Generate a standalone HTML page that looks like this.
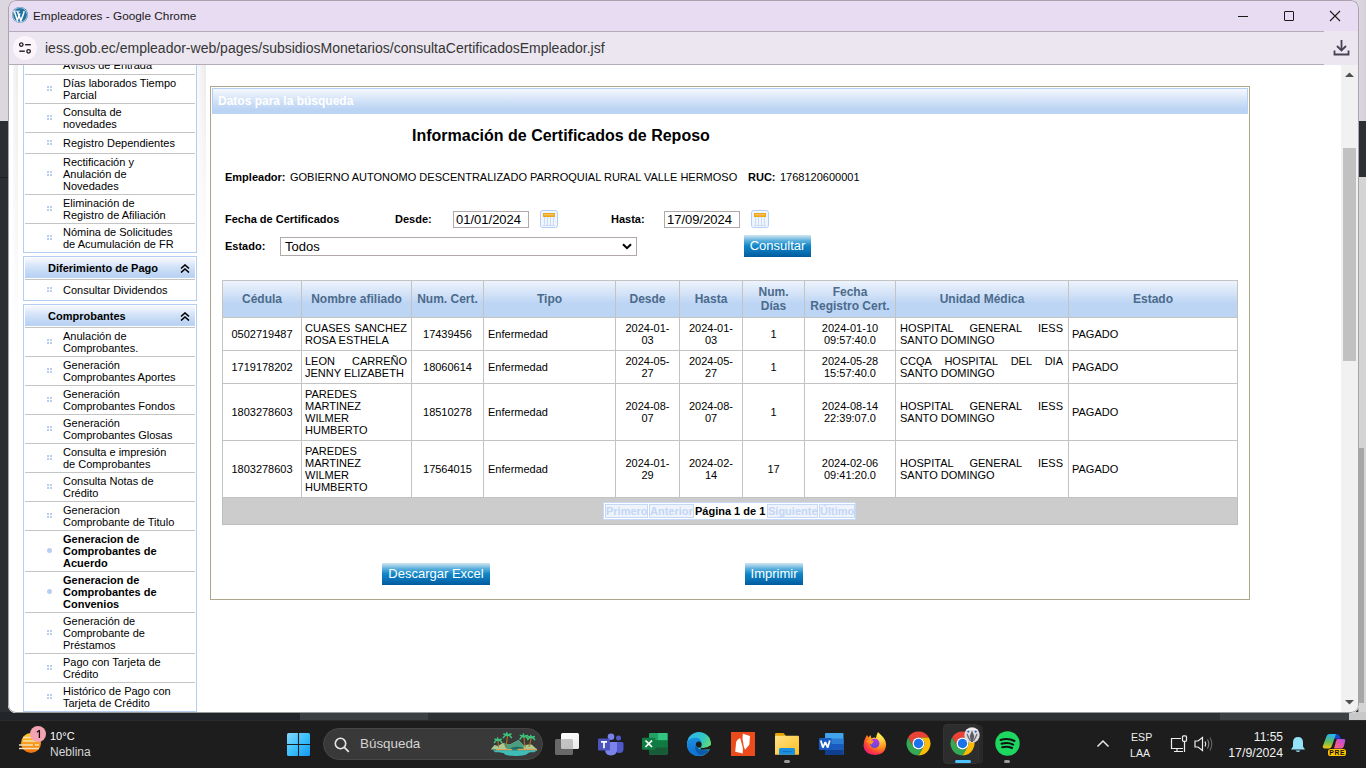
<!DOCTYPE html>
<html><head><meta charset="utf-8"><style>
*{box-sizing:border-box;margin:0;padding:0}
html,body{width:1366px;height:768px;overflow:hidden;background:#2b2f33;font-family:"Liberation Sans",sans-serif;position:relative}
.a{position:absolute}
.t{position:absolute;white-space:nowrap;line-height:12px}
#win{left:8px;top:0;width:1351px;height:713px;background:#fff;border-radius:8px;overflow:hidden}
#title{left:0;top:0;width:1351px;height:31px;background:#e8dcf2}
#addr{left:0;top:31px;width:1351px;height:34px;background:#ebe6ef}
#content{left:0;top:65px;width:1351px;height:648px;background:#fff;overflow:hidden}
#pg{left:-8px;top:-65px;width:1366px;height:768px}
#task{left:0;top:720px;width:1366px;height:48px;background:#1d1d1d;border-top:1px solid #2c2c2c}
.sb{font-size:11px;color:#000}
.sep{position:absolute;left:25px;width:170px;height:1px;background:#c4c4c4}
.dots{position:absolute;width:5px;height:5px;background:
 linear-gradient(#b9cff2,#b9cff2) 0 0/2px 2px no-repeat,
 linear-gradient(#b9cff2,#b9cff2) 3px 0/2px 2px no-repeat,
 linear-gradient(#b9cff2,#b9cff2) 0 3px/2px 2px no-repeat,
 linear-gradient(#b9cff2,#b9cff2) 3px 3px/2px 2px no-repeat}
.bdot{position:absolute;width:5px;height:5px;border-radius:50%;background:#b9cff2}
.panel{position:absolute;left:23px;width:174px;border:1px solid #b4cdf3;background:#fff}
.phead{position:absolute;left:25px;width:170px;height:20px;background:linear-gradient(#f6f9fe,#cfe0f7 50%,#bcd4f4 85%)}
.ptxt{position:absolute;left:48px;font-size:11px;font-weight:bold;line-height:12px;white-space:nowrap}
</style></head><body>
<div class="a" style="left:0px;top:0px;width:1366px;height:121px;background:#dcd6df"></div>
<div class="a" style="left:0px;top:121px;width:8px;height:599px;background:#2b2f33"></div>
<div class="a" style="left:0px;top:177px;width:8px;height:1px;background:#1c1f22"></div>
<div class="a" style="left:1358px;top:0px;width:8px;height:121px;background:linear-gradient(to right,#ddd7e0,#d6d0da)"></div>
<div class="a" style="left:1358px;top:121px;width:8px;height:56px;background:#2c3034"></div>
<div class="a" style="left:1358px;top:177px;width:8px;height:543px;background:#d4d4d5;border-left:1px solid #a0a0a2"></div>
<div class="a" style="left:1358px;top:448px;width:6px;height:255px;background:#a6a6a6"></div>
<div class="a" style="left:0px;top:712px;width:300px;height:8px;background:#22262a"></div>
<div class="a" style="left:300px;top:712px;width:128px;height:8px;background:#3c4043"></div>
<div class="a" style="left:428px;top:712px;width:792px;height:8px;background:#2e3134"></div>
<div class="a" style="left:1220px;top:712px;width:129px;height:8px;background:#3c4043"></div>
<div class="a" style="left:1349px;top:712px;width:17px;height:8px;background:#c8c8c8"></div>
<div class="a" id="win"><div class="a" id="title"></div><div class="a" id="addr"></div><div class="a" id="content"><div class="a" id="pg">
<div class="panel" style="top:20px;height:233px"></div>
<div class="t sb" style="left:63px;top:59px;">Avisos de Entrada</div>
<div class="sep" style="top:74px"></div>
<div class="t sb" style="left:63px;top:77px;">Días laborados Tiempo</div>
<div class="t sb" style="left:63px;top:89px;">Parcial</div>
<div class="dots" style="left:47px;top:86px"></div>
<div class="sep" style="top:103px"></div>
<div class="t sb" style="left:63px;top:106px;">Consulta de</div>
<div class="t sb" style="left:63px;top:118px;">novedades</div>
<div class="dots" style="left:47px;top:115px"></div>
<div class="sep" style="top:132px"></div>
<div class="t sb" style="left:63px;top:137px;">Registro Dependientes</div>
<div class="dots" style="left:47px;top:140px"></div>
<div class="sep" style="top:153px"></div>
<div class="t sb" style="left:63px;top:156px;">Rectificación y</div>
<div class="t sb" style="left:63px;top:168px;">Anulación de</div>
<div class="t sb" style="left:63px;top:180px;">Novedades</div>
<div class="dots" style="left:47px;top:171px"></div>
<div class="sep" style="top:194px"></div>
<div class="t sb" style="left:63px;top:197px;">Eliminación de</div>
<div class="t sb" style="left:63px;top:209px;">Registro de Afiliación</div>
<div class="dots" style="left:47px;top:206px"></div>
<div class="sep" style="top:223px"></div>
<div class="t sb" style="left:63px;top:226px;">Nómina de Solicitudes</div>
<div class="t sb" style="left:63px;top:238px;">de Acumulación de FR</div>
<div class="dots" style="left:47px;top:235px"></div>
<div class="panel" style="top:256px;height:45px"></div>
<div class="phead" style="top:258px"></div>
<div class="ptxt" style="top:262px">Diferimiento de Pago</div>
<svg class="a" style="left:180px;top:264px" width="10" height="9" viewBox="0 0 10 9"><path d="M1 4.5L5 1L9 4.5M1 8.5L5 5L9 8.5" fill="none" stroke="#000" stroke-width="1.6"/></svg>
<div class="sep" style="top:279px"></div>
<div class="t sb" style="left:63px;top:284px;">Consultar Dividendos</div>
<div class="dots" style="left:47px;top:287px"></div>
<div class="panel" style="top:304px;height:408px"></div>
<div class="phead" style="top:306px"></div>
<div class="ptxt" style="top:310px">Comprobantes</div>
<svg class="a" style="left:180px;top:312px" width="10" height="9" viewBox="0 0 10 9"><path d="M1 4.5L5 1L9 4.5M1 8.5L5 5L9 8.5" fill="none" stroke="#000" stroke-width="1.6"/></svg>
<div class="sep" style="top:327px"></div>
<div class="t sb" style="left:63px;top:330px;">Anulación de</div>
<div class="t sb" style="left:63px;top:342px;">Comprobantes.</div>
<div class="dots" style="left:47px;top:339px"></div>
<div class="sep" style="top:356px"></div>
<div class="t sb" style="left:63px;top:359px;">Generación</div>
<div class="t sb" style="left:63px;top:371px;">Comprobantes Aportes</div>
<div class="dots" style="left:47px;top:368px"></div>
<div class="sep" style="top:385px"></div>
<div class="t sb" style="left:63px;top:388px;">Generación</div>
<div class="t sb" style="left:63px;top:400px;">Comprobantes Fondos</div>
<div class="dots" style="left:47px;top:397px"></div>
<div class="sep" style="top:414px"></div>
<div class="t sb" style="left:63px;top:417px;">Generación</div>
<div class="t sb" style="left:63px;top:429px;">Comprobantes Glosas</div>
<div class="dots" style="left:47px;top:426px"></div>
<div class="sep" style="top:443px"></div>
<div class="t sb" style="left:63px;top:446px;">Consulta e impresión</div>
<div class="t sb" style="left:63px;top:458px;">de Comprobantes</div>
<div class="dots" style="left:47px;top:455px"></div>
<div class="sep" style="top:472px"></div>
<div class="t sb" style="left:63px;top:475px;">Consulta Notas de</div>
<div class="t sb" style="left:63px;top:487px;">Crédito</div>
<div class="dots" style="left:47px;top:484px"></div>
<div class="sep" style="top:501px"></div>
<div class="t sb" style="left:63px;top:504px;">Generacion</div>
<div class="t sb" style="left:63px;top:516px;">Comprobante de Titulo</div>
<div class="dots" style="left:47px;top:513px"></div>
<div class="sep" style="top:530px"></div>
<div class="t sb" style="left:63px;top:533px;font-weight:bold">Generacion de</div>
<div class="t sb" style="left:63px;top:545px;font-weight:bold">Comprobantes de</div>
<div class="t sb" style="left:63px;top:557px;font-weight:bold">Acuerdo</div>
<div class="bdot" style="left:47px;top:548px"></div>
<div class="sep" style="top:571px"></div>
<div class="t sb" style="left:63px;top:574px;font-weight:bold">Generacion de</div>
<div class="t sb" style="left:63px;top:586px;font-weight:bold">Comprobantes de</div>
<div class="t sb" style="left:63px;top:598px;font-weight:bold">Convenios</div>
<div class="bdot" style="left:47px;top:589px"></div>
<div class="sep" style="top:612px"></div>
<div class="t sb" style="left:63px;top:615px;">Generación de</div>
<div class="t sb" style="left:63px;top:627px;">Comprobante de</div>
<div class="t sb" style="left:63px;top:639px;">Préstamos</div>
<div class="dots" style="left:47px;top:630px"></div>
<div class="sep" style="top:653px"></div>
<div class="t sb" style="left:63px;top:656px;">Pago con Tarjeta de</div>
<div class="t sb" style="left:63px;top:668px;">Crédito</div>
<div class="dots" style="left:47px;top:665px"></div>
<div class="sep" style="top:682px"></div>
<div class="t sb" style="left:63px;top:685px;">Histórico de Pago con</div>
<div class="t sb" style="left:63px;top:697px;">Tarjeta de Crédito</div>
<div class="dots" style="left:47px;top:694px"></div>
<div class="a" style="left:13px;top:65px;width:5px;height:290px;background:linear-gradient(to bottom,rgba(255,255,255,0),rgba(255,255,255,1)),linear-gradient(to right,#f7f7f7,#ececec)"></div>
<div class="a" style="left:197px;top:65px;width:9px;height:200px;background:linear-gradient(to bottom,rgba(255,255,255,0),rgba(255,255,255,1)),linear-gradient(to right,#fafafa,#ebebeb)"></div>
<div class="a" style="left:210px;top:86px;width:1040px;height:514px;border:1px solid #aea68a"></div>
<div class="a" style="left:212px;top:88px;width:1036px;height:26px;border-top:1px solid #b6cff5;border-left:1px solid #b6cff5;border-right:1px solid #b6cff5;background:linear-gradient(#f5f8fe,#d0e1f7 50%,#bcd4f4 80%)"></div>
<div class="t" style="left:218px;top:94px;font-size:12px;font-weight:bold;color:#fff;line-height:14px">Datos para la búsqueda</div>
<div class="t" style="left:412px;top:127px;font-size:16px;font-weight:bold;color:#000;line-height:18px">Información de Certificados de Reposo</div>
<div class="t" style="left:225px;top:171px;font-size:11px;font-weight:bold;line-height:12px">Empleador:</div>
<div class="t" style="left:290px;top:171px;font-size:11px;line-height:12px">GOBIERNO AUTONOMO DESCENTRALIZADO PARROQUIAL RURAL VALLE HERMOSO</div>
<div class="t" style="left:748px;top:171px;font-size:11px;font-weight:bold;line-height:12px">RUC:</div>
<div class="t" style="left:780px;top:171px;font-size:11px;line-height:12px">1768120600001</div>
<div class="t" style="left:225px;top:213px;font-size:11px;font-weight:bold;line-height:12px">Fecha de Certificados</div>
<div class="t" style="left:395px;top:213px;font-size:11px;font-weight:bold;line-height:12px">Desde:</div>
<div class="t" style="left:611px;top:213px;font-size:11px;font-weight:bold;line-height:12px">Hasta:</div>
<div class="t" style="left:225px;top:240px;font-size:11px;font-weight:bold;line-height:12px">Estado:</div>
<div class="a" style="left:453px;top:211px;width:76px;height:17px;border:1px solid #b1a9a9;background:#fff"></div>
<div class="t" style="left:456px;top:212px;font-size:13px;line-height:15px">01/01/2024</div>
<div class="a" style="left:664px;top:211px;width:76px;height:17px;border:1px solid #b1a9a9;background:#fff"></div>
<div class="t" style="left:667px;top:212px;font-size:13px;line-height:15px">17/09/2024</div>
<svg class="a" style="left:540px;top:210px" width="18" height="18" viewBox="0 0 18 18"><rect x="0.5" y="0.5" width="17" height="17" rx="2" fill="#eef5fe" stroke="#b3cff7"/><rect x="3" y="3" width="12" height="4" fill="#eea418"/><rect x="4" y="4.3" width="10" height="1" fill="#f6cf7a"/><path d="M4.5 7v8M7.5 7v8M10.5 7v8M13.5 7v8" stroke="#c9dcf5" stroke-width="1"/><path d="M3 15.5h12" stroke="#d0dcec"/></svg>
<svg class="a" style="left:751px;top:210px" width="18" height="18" viewBox="0 0 18 18"><rect x="0.5" y="0.5" width="17" height="17" rx="2" fill="#eef5fe" stroke="#b3cff7"/><rect x="3" y="3" width="12" height="4" fill="#eea418"/><rect x="4" y="4.3" width="10" height="1" fill="#f6cf7a"/><path d="M4.5 7v8M7.5 7v8M10.5 7v8M13.5 7v8" stroke="#c9dcf5" stroke-width="1"/><path d="M3 15.5h12" stroke="#d0dcec"/></svg>
<div class="a" style="left:280px;top:237px;width:357px;height:19px;border:1px solid #b1a9a9;background:#fff"></div>
<div class="t" style="left:285px;top:239px;font-size:13px;line-height:15px">Todos</div>
<svg class="a" style="left:622px;top:243px" width="10" height="7" viewBox="0 0 10 7"><path d="M1 1.2L5 5.2L9 1.2" fill="none" stroke="#000" stroke-width="2"/></svg>
<div class="a" style="left:744px;top:235px;width:67px;height:22px;background:linear-gradient(#d3e6f1 0%,#5fb1dd 25%,#0f86c7 50%,#0a72b5 75%,#005a9e 100%);color:#fff;font-size:13px;line-height:15px;text-align:center;padding-top:3px">Consultar</div>
<div class="a" style="left:382px;top:563px;width:108px;height:22px;background:linear-gradient(#d3e6f1 0%,#5fb1dd 25%,#0f86c7 50%,#0a72b5 75%,#005a9e 100%);color:#fff;font-size:13px;line-height:15px;text-align:center;padding-top:3px">Descargar Excel</div>
<div class="a" style="left:745px;top:563px;width:58px;height:22px;background:linear-gradient(#d3e6f1 0%,#5fb1dd 25%,#0f86c7 50%,#0a72b5 75%,#005a9e 100%);color:#fff;font-size:13px;line-height:15px;text-align:center;padding-top:3px">Imprimir</div>
<div class="a" style="left:222px;top:281px;width:1015px;height:36px;background:linear-gradient(#eef4fd,#cfe0f7 40%,#bdd5f4 62%,#bcd5f4)"></div>
<div class="a" style="left:222px;top:280px;width:1px;height:218px;background:#c3c3c3"></div>
<div class="a" style="left:301px;top:280px;width:1px;height:218px;background:#c3c3c3"></div>
<div class="a" style="left:411px;top:280px;width:1px;height:218px;background:#c3c3c3"></div>
<div class="a" style="left:483px;top:280px;width:1px;height:218px;background:#c3c3c3"></div>
<div class="a" style="left:615px;top:280px;width:1px;height:218px;background:#c3c3c3"></div>
<div class="a" style="left:679px;top:280px;width:1px;height:218px;background:#c3c3c3"></div>
<div class="a" style="left:742px;top:280px;width:1px;height:218px;background:#c3c3c3"></div>
<div class="a" style="left:804px;top:280px;width:1px;height:218px;background:#c3c3c3"></div>
<div class="a" style="left:895px;top:280px;width:1px;height:218px;background:#c3c3c3"></div>
<div class="a" style="left:1068px;top:280px;width:1px;height:218px;background:#c3c3c3"></div>
<div class="a" style="left:1237px;top:280px;width:1px;height:218px;background:#c3c3c3"></div>
<div class="a" style="left:222px;top:280px;width:1016px;height:1px;background:#c3c3c3"></div>
<div class="a" style="left:222px;top:317px;width:1016px;height:1px;background:#c3c3c3"></div>
<div class="a" style="left:222px;top:350px;width:1016px;height:1px;background:#c3c3c3"></div>
<div class="a" style="left:222px;top:383px;width:1016px;height:1px;background:#c3c3c3"></div>
<div class="a" style="left:222px;top:440px;width:1016px;height:1px;background:#c3c3c3"></div>
<div class="a" style="left:222px;top:497px;width:1016px;height:1px;background:#c3c3c3"></div>
<div class="t" style="left:223px;width:78px;top:292px;text-align:center;font-size:12px;font-weight:bold;color:#4b6b8c;line-height:14px">Cédula</div>
<div class="t" style="left:302px;width:109px;top:292px;text-align:center;font-size:12px;font-weight:bold;color:#4b6b8c;line-height:14px">Nombre afiliado</div>
<div class="t" style="left:412px;width:71px;top:292px;text-align:center;font-size:12px;font-weight:bold;color:#4b6b8c;line-height:14px">Num. Cert.</div>
<div class="t" style="left:484px;width:131px;top:292px;text-align:center;font-size:12px;font-weight:bold;color:#4b6b8c;line-height:14px">Tipo</div>
<div class="t" style="left:616px;width:63px;top:292px;text-align:center;font-size:12px;font-weight:bold;color:#4b6b8c;line-height:14px">Desde</div>
<div class="t" style="left:680px;width:62px;top:292px;text-align:center;font-size:12px;font-weight:bold;color:#4b6b8c;line-height:14px">Hasta</div>
<div class="t" style="left:743px;width:61px;top:285px;text-align:center;font-size:12px;font-weight:bold;color:#4b6b8c;line-height:14px">Num.</div>
<div class="t" style="left:743px;width:61px;top:299px;text-align:center;font-size:12px;font-weight:bold;color:#4b6b8c;line-height:14px">Días</div>
<div class="t" style="left:805px;width:90px;top:285px;text-align:center;font-size:12px;font-weight:bold;color:#4b6b8c;line-height:14px">Fecha</div>
<div class="t" style="left:805px;width:90px;top:299px;text-align:center;font-size:12px;font-weight:bold;color:#4b6b8c;line-height:14px">Registro Cert.</div>
<div class="t" style="left:896px;width:172px;top:292px;text-align:center;font-size:12px;font-weight:bold;color:#4b6b8c;line-height:14px">Unidad Médica</div>
<div class="t" style="left:1069px;width:168px;top:292px;text-align:center;font-size:12px;font-weight:bold;color:#4b6b8c;line-height:14px">Estado</div>
<div class="t" style="left:223px;width:78px;top:328px;text-align:center;font-size:11px">0502719487</div>
<div class="t" style="left:305px;width:102px;top:322px;font-size:11px;display:flex;justify-content:space-between"><span>CUASES</span><span>SANCHEZ</span></div>
<div class="t" style="left:305px;top:334px;font-size:11px">ROSA ESTHELA</div>
<div class="t" style="left:412px;width:71px;top:328px;text-align:center;font-size:11px">17439456</div>
<div class="t" style="left:488px;top:328px;font-size:11px">Enfermedad</div>
<div class="t" style="left:616px;width:63px;top:322px;text-align:center;font-size:11px">2024-01-</div>
<div class="t" style="left:616px;width:63px;top:334px;text-align:center;font-size:11px">03</div>
<div class="t" style="left:680px;width:62px;top:322px;text-align:center;font-size:11px">2024-01-</div>
<div class="t" style="left:680px;width:62px;top:334px;text-align:center;font-size:11px">03</div>
<div class="t" style="left:743px;width:61px;top:328px;text-align:center;font-size:11px">1</div>
<div class="t" style="left:805px;width:90px;top:322px;text-align:center;font-size:11px">2024-01-10</div>
<div class="t" style="left:805px;width:90px;top:334px;text-align:center;font-size:11px">09:57:40.0</div>
<div class="t" style="left:900px;width:163px;top:322px;font-size:11px;display:flex;justify-content:space-between"><span>HOSPITAL</span><span>GENERAL</span><span>IESS</span></div>
<div class="t" style="left:900px;top:334px;font-size:11px">SANTO DOMINGO</div>
<div class="t" style="left:1072px;top:328px;font-size:11px">PAGADO</div>
<div class="t" style="left:223px;width:78px;top:361px;text-align:center;font-size:11px">1719178202</div>
<div class="t" style="left:305px;width:102px;top:355px;font-size:11px;display:flex;justify-content:space-between"><span>LEON</span><span>CARREÑO</span></div>
<div class="t" style="left:305px;top:367px;font-size:11px">JENNY ELIZABETH</div>
<div class="t" style="left:412px;width:71px;top:361px;text-align:center;font-size:11px">18060614</div>
<div class="t" style="left:488px;top:361px;font-size:11px">Enfermedad</div>
<div class="t" style="left:616px;width:63px;top:355px;text-align:center;font-size:11px">2024-05-</div>
<div class="t" style="left:616px;width:63px;top:367px;text-align:center;font-size:11px">27</div>
<div class="t" style="left:680px;width:62px;top:355px;text-align:center;font-size:11px">2024-05-</div>
<div class="t" style="left:680px;width:62px;top:367px;text-align:center;font-size:11px">27</div>
<div class="t" style="left:743px;width:61px;top:361px;text-align:center;font-size:11px">1</div>
<div class="t" style="left:805px;width:90px;top:355px;text-align:center;font-size:11px">2024-05-28</div>
<div class="t" style="left:805px;width:90px;top:367px;text-align:center;font-size:11px">15:57:40.0</div>
<div class="t" style="left:900px;width:163px;top:355px;font-size:11px;display:flex;justify-content:space-between"><span>CCQA</span><span>HOSPITAL</span><span>DEL</span><span>DIA</span></div>
<div class="t" style="left:900px;top:367px;font-size:11px">SANTO DOMINGO</div>
<div class="t" style="left:1072px;top:361px;font-size:11px">PAGADO</div>
<div class="t" style="left:223px;width:78px;top:406px;text-align:center;font-size:11px">1803278603</div>
<div class="t" style="left:305px;top:388px;font-size:11px">PAREDES</div>
<div class="t" style="left:305px;top:400px;font-size:11px">MARTINEZ</div>
<div class="t" style="left:305px;top:412px;font-size:11px">WILMER</div>
<div class="t" style="left:305px;top:424px;font-size:11px">HUMBERTO</div>
<div class="t" style="left:412px;width:71px;top:406px;text-align:center;font-size:11px">18510278</div>
<div class="t" style="left:488px;top:406px;font-size:11px">Enfermedad</div>
<div class="t" style="left:616px;width:63px;top:400px;text-align:center;font-size:11px">2024-08-</div>
<div class="t" style="left:616px;width:63px;top:412px;text-align:center;font-size:11px">07</div>
<div class="t" style="left:680px;width:62px;top:400px;text-align:center;font-size:11px">2024-08-</div>
<div class="t" style="left:680px;width:62px;top:412px;text-align:center;font-size:11px">07</div>
<div class="t" style="left:743px;width:61px;top:406px;text-align:center;font-size:11px">1</div>
<div class="t" style="left:805px;width:90px;top:400px;text-align:center;font-size:11px">2024-08-14</div>
<div class="t" style="left:805px;width:90px;top:412px;text-align:center;font-size:11px">22:39:07.0</div>
<div class="t" style="left:900px;width:163px;top:400px;font-size:11px;display:flex;justify-content:space-between"><span>HOSPITAL</span><span>GENERAL</span><span>IESS</span></div>
<div class="t" style="left:900px;top:412px;font-size:11px">SANTO DOMINGO</div>
<div class="t" style="left:1072px;top:406px;font-size:11px">PAGADO</div>
<div class="t" style="left:223px;width:78px;top:463px;text-align:center;font-size:11px">1803278603</div>
<div class="t" style="left:305px;top:445px;font-size:11px">PAREDES</div>
<div class="t" style="left:305px;top:457px;font-size:11px">MARTINEZ</div>
<div class="t" style="left:305px;top:469px;font-size:11px">WILMER</div>
<div class="t" style="left:305px;top:481px;font-size:11px">HUMBERTO</div>
<div class="t" style="left:412px;width:71px;top:463px;text-align:center;font-size:11px">17564015</div>
<div class="t" style="left:488px;top:463px;font-size:11px">Enfermedad</div>
<div class="t" style="left:616px;width:63px;top:457px;text-align:center;font-size:11px">2024-01-</div>
<div class="t" style="left:616px;width:63px;top:469px;text-align:center;font-size:11px">29</div>
<div class="t" style="left:680px;width:62px;top:457px;text-align:center;font-size:11px">2024-02-</div>
<div class="t" style="left:680px;width:62px;top:469px;text-align:center;font-size:11px">14</div>
<div class="t" style="left:743px;width:61px;top:463px;text-align:center;font-size:11px">17</div>
<div class="t" style="left:805px;width:90px;top:457px;text-align:center;font-size:11px">2024-02-06</div>
<div class="t" style="left:805px;width:90px;top:469px;text-align:center;font-size:11px">09:41:20.0</div>
<div class="t" style="left:900px;width:163px;top:457px;font-size:11px;display:flex;justify-content:space-between"><span>HOSPITAL</span><span>GENERAL</span><span>IESS</span></div>
<div class="t" style="left:900px;top:469px;font-size:11px">SANTO DOMINGO</div>
<div class="t" style="left:1072px;top:463px;font-size:11px">PAGADO</div>
<div class="a" style="left:223px;top:498px;width:1014px;height:26px;background:#cccccc"></div>
<div class="a" style="left:222px;top:524px;width:1016px;height:1px;background:#bdbdbd"></div>
<div class="a" style="left:222px;top:498px;width:1px;height:27px;background:#bdbdbd"></div>
<div class="a" style="left:1237px;top:498px;width:1px;height:27px;background:#bdbdbd"></div>
<div class="a" style="left:603px;top:502px;width:253px;height:18px;background:#fff;border:1px solid #c5d8f6"></div>
<div class="a" style="left:605px;top:504px;width:43px;height:14px;background:#eef3fc;border:1px solid #c5d8f6"></div>
<div class="t" style="left:606px;top:505px;font-size:11px;font-weight:bold;color:#c3d6f5">Primero</div>
<div class="a" style="left:649px;top:504px;width:45px;height:14px;background:#eef3fc;border:1px solid #c5d8f6"></div>
<div class="t" style="left:650px;top:505px;font-size:11px;font-weight:bold;color:#c3d6f5">Anterior</div>
<div class="a" style="left:767px;top:504px;width:51px;height:14px;background:#eef3fc;border:1px solid #c5d8f6"></div>
<div class="t" style="left:768px;top:505px;font-size:11px;font-weight:bold;color:#c3d6f5">Siguiente</div>
<div class="a" style="left:819px;top:504px;width:36px;height:14px;background:#eef3fc;border:1px solid #c5d8f6"></div>
<div class="t" style="left:820px;top:505px;font-size:11px;font-weight:bold;color:#c3d6f5">Último</div>
<div class="t" style="left:695px;top:505px;font-size:11px;font-weight:bold;color:#000">Página 1 de 1</div>
<div class="a" style="left:1341px;top:65px;width:17px;height:647px;background:#f1f1f1"></div>
<div class="a" style="left:1343px;top:148px;width:13px;height:213px;background:#c1c1c1"></div>
<svg class="a" style="left:1344px;top:71px" width="11" height="7" viewBox="0 0 11 7"><path d="M1 6L5.5 1.5L10 6Z" fill="#505050"/></svg>
<svg class="a" style="left:1344px;top:699px" width="11" height="7" viewBox="0 0 11 7"><path d="M1 1L5.5 5.5L10 1Z" fill="#505050"/></svg>
</div></div><div class="a" style="left:0;top:0;width:1351px;height:713px;border:1px solid #aaa3ae;border-bottom-color:#9a9a9a;border-radius:8px"></div></div>
<svg class="a" style="left:11px;top:7px" width="18" height="17" viewBox="0 0 18 17"><circle cx="9" cy="7.9" r="7.9" fill="#21719f"/><circle cx="9" cy="7.9" r="7.2" fill="none" stroke="#cfe6f0" stroke-width="0.8"/><circle cx="9" cy="7.9" r="6.3" fill="#2272a0"/><path d="M3.3 4.3L6.3 13.3L8.9 6.4M6.4 4.3L9.9 13.6L12.6 6.5Q13.2 5 12.9 4" fill="none" stroke="#fff" stroke-width="1.5"/><path d="M2.5 4.2H5.8M5.7 4.2H9" stroke="#fff" stroke-width="0.8"/></svg>
<div class="t" style="left:33px;top:9px;font-size:11.8px;line-height:14px;color:#1a1a1a">Empleadores - Google Chrome</div>
<div class="a" style="left:8px;top:31px;width:1316px;height:1px;background:#b3abb8"></div>
<div class="a" style="left:8px;top:64px;width:1316px;height:1px;background:#b3abb8"></div>
<div class="a" style="left:1238px;top:16px;width:10px;height:1px;background:#1a1a1a"></div>
<div class="a" style="left:1284px;top:11px;width:10px;height:10px;border:1px solid #1a1a1a;border-radius:1px"></div>
<svg class="a" style="left:1329px;top:10px" width="12" height="12" viewBox="0 0 12 12"><path d="M1 1L11 11M11 1L1 11" stroke="#1a1a1a" stroke-width="1.1"/></svg>
<div class="a" style="left:13px;top:36px;width:24px;height:24px;border-radius:50%;background:#fbf5fb"></div>
<svg class="a" style="left:19px;top:42px" width="13" height="12" viewBox="0 0 13 12"><circle cx="2.3" cy="2.6" r="1.75" fill="none" stroke="#1e1e1e" stroke-width="1.3"/><path d="M6.1 2.7H11.8" stroke="#1e1e1e" stroke-width="1.4"/><circle cx="9.6" cy="9.3" r="1.75" fill="none" stroke="#1e1e1e" stroke-width="1.3"/><path d="M0.3 9.2H5.8" stroke="#1e1e1e" stroke-width="1.4"/></svg>
<div class="t" style="left:45px;top:40px;font-size:14px;line-height:16px;color:#363636">iess.gob.ec/empleador-web/pages/subsidiosMonetarios/consultaCertificadosEmpleador.jsf</div>
<svg class="a" style="left:1333px;top:39px" width="17" height="17" viewBox="0 0 17 17"><path d="M8.5 1V11M4 7L8.5 11.5L13 7" fill="none" stroke="#474152" stroke-width="1.8"/><path d="M1.5 11.5V15.5H15.5V11.5" fill="none" stroke="#474152" stroke-width="1.8"/></svg>
<div class="a" id="task"></div>
<svg class="a" style="left:18px;top:731px" width="26" height="24" viewBox="0 0 26 24"><defs><linearGradient id="sun" x1="0" y1="0" x2="0" y2="1"><stop offset="0" stop-color="#ffcd2e"/><stop offset="1" stop-color="#f07010"/></linearGradient></defs><circle cx="13" cy="12" r="10" fill="url(#sun)"/><path d="M5 6.5h8M5 10h14M1 14h14M17 14h4M1 17.5h20" stroke="#f3e2b3" stroke-width="1.6"/></svg>
<div class="a" style="left:30px;top:726px;width:16px;height:16px;border-radius:50%;background:#f4a3b3"></div>
<svg class="a" style="left:30px;top:726px" width="16" height="16" viewBox="0 0 16 16"><path d="M9.4 4.2V12" stroke="#111" stroke-width="1.3"/><path d="M6.8 6.2L9.6 4.2" stroke="#111" stroke-width="1.1"/></svg>
<div class="t" style="left:50px;top:730px;font-size:11px;line-height:13px;color:#fff">10°C</div>
<div class="t" style="left:50px;top:745px;font-size:12px;line-height:14px;color:#d6d6d6">Neblina</div>
<svg class="a" style="left:287px;top:733px" width="23" height="23" viewBox="0 0 23 23"><defs><linearGradient id="wl" gradientUnits="userSpaceOnUse" x1="0" y1="0" x2="23" y2="23"><stop offset="0" stop-color="#86d8fc"/><stop offset="0.5" stop-color="#3cc0fb"/><stop offset="1" stop-color="#1399f4"/></linearGradient></defs><rect x="0" y="0" width="23" height="23" rx="1.6" fill="url(#wl)"/><path d="M11.5 0V23M0 11.5H23" stroke="#1d1d1d" stroke-width="1.1"/></svg>
<div class="a" style="left:323px;top:728px;width:220px;height:32px;border-radius:16px;background:#393939;border:1px solid #464646"></div>
<svg class="a" style="left:334px;top:737px" width="16" height="16" viewBox="0 0 16 16"><circle cx="6.5" cy="6.5" r="5.2" fill="none" stroke="#e6e6e6" stroke-width="1.6"/><path d="M10.3 10.3L14.8 14.8" stroke="#e6e6e6" stroke-width="1.8"/></svg>
<div class="t" style="left:360px;top:736px;font-size:13.4px;line-height:16px;color:#d4d4d4">Búsqueda</div>
<svg class="a" style="left:490px;top:731px" width="49" height="26" viewBox="0 0 49 26"><path d="M0.8 18.6L4.4 14.1L8 15L13 11.8L17 13.5L21 13L28.5 9.1L34 14.5L38 13.5L41.7 13.5L47 18.6Z" fill="#a9c995"/><path d="M13 11.8L17 13.5L21 13L28.5 9.1L34 14.5L33 18.6L17 18.6Z" fill="#4a9e80"/><path d="M21 17Q28 14.5 34 17L33 18.6H20Z" fill="#1f6b66"/><path d="M5.8 18.8H22M27.6 18.6H47" stroke="#e0a050" stroke-width="1.6"/><path d="M3.1 19.3H47.6L44 21.3H40L38 22.3Q36 25 26 25Q14 25 14 22.3L9 21.3H5Z" fill="#3fbcb6"/><path d="M8.5 16.3Q8 12 8.1 9.5M15.3 16.3Q17.5 10 17.4 4.5M35.3 16.3Q34 10 34 5.9M38.9 15.9Q41 10 41.2 6.8" stroke="#b0721c" stroke-width="1.1" fill="none"/><path d="M4.5 11.5Q6.3 8.4 8.1 9.5Q9.9 8.4 11.7 11.5M4.9 8.2Q7.0 8.4 8.1 9.5Q9.2 8.4 11.3 8.2M8.1 9.5L7.6 7.0M13.4 6.7Q15.4 3.3 17.4 4.5Q19.4 3.3 21.4 6.7M13.8 3.1Q16.2 3.3 17.4 4.5Q18.6 3.3 21.0 3.1M17.4 4.5L16.8 1.7M30.0 8.1Q32.0 4.7 34 5.9Q36.0 4.7 38.0 8.1M30.4 4.5Q32.8 4.7 34 5.9Q35.2 4.7 37.6 4.5M34 5.9L33.4 3.1M37.8 8.7Q39.5 5.8 41.2 6.8Q42.9 5.8 44.6 8.7M38.1 5.6Q40.2 5.8 41.2 6.8Q42.2 5.8 44.3 5.6M41.2 6.8L40.7 4.4" stroke="#3cc47c" stroke-width="1.5" fill="none" stroke-linecap="round"/></svg>
<div class="a" style="left:561px;top:733px;width:18px;height:16px;border-radius:1.5px;background:linear-gradient(160deg,#ffffff,#e8e8e8)"></div>
<div class="a" style="left:555px;top:739px;width:18px;height:16px;border-radius:1.5px;background:rgba(161,161,161,0.58)"></div>
<svg class="a" style="left:598px;top:733px" width="26" height="23" viewBox="0 0 26 23"><circle cx="13" cy="3.8" r="3.3" fill="#7b83eb"/><circle cx="20.5" cy="5" r="2.5" fill="#5059c9"/><path d="M17 9h7q1.5 0 1.5 1.5v5.5q0 4-4 4t-4.5-3z" fill="#5059c9"/><path d="M7 9h12v7q0 6.5-6 6.5t-6-6.5z" fill="#7b83eb"/><rect x="0" y="5.5" width="12" height="12" rx="1.3" fill="#4b53bc"/><path d="M3 8.8h6M6 8.8v6.5" stroke="#fff" stroke-width="1.7"/></svg>
<svg class="a" style="left:642px;top:733px" width="26" height="21.5" viewBox="0 0 26 23" preserveAspectRatio="none"><rect x="7" y="0" width="18.5" height="23" rx="1" fill="#21a366"/><rect x="7" y="7.6" width="18.5" height="7.6" fill="#107c41"/><rect x="16" y="0" width="9.5" height="7.6" fill="#33c481"/><rect x="7" y="15.2" width="18.5" height="7.8" fill="#185c37"/><rect x="0" y="5" width="13.5" height="13" rx="1.2" fill="#107c41"/><path d="M3.5 8L10 15M10 8L3.5 15" stroke="#fff" stroke-width="1.8"/></svg>
<svg class="a" style="left:687px;top:732px" width="24" height="24" viewBox="0 0 24 24"><defs><linearGradient id="eg1" x1="0" y1="0.2" x2="1" y2="0.7"><stop offset="0" stop-color="#31b8f2"/><stop offset="0.55" stop-color="#2fc6c4"/><stop offset="1" stop-color="#74e35a"/></linearGradient><linearGradient id="eg2" x1="0" y1="0" x2="0" y2="1"><stop offset="0" stop-color="#1a8fe0"/><stop offset="1" stop-color="#0e6fd0"/></linearGradient></defs><circle cx="12" cy="12" r="12" fill="url(#eg1)"/><path d="M0.4 9.5Q3.5 5.2 9.5 5.8Q13.5 6.5 14.5 10L12 10.2Q9.2 10.5 8.6 13.3Q8.6 17.3 14 17.6Q19 17.8 22.6 17.2Q19.5 23.8 12 24Q0.2 23.6 0.1 12Z" fill="url(#eg2)"/><path d="M8.6 12.5Q6.8 19.5 13 22.8Q18 23.5 22.2 18.8Q15 18.8 11.8 16.8Q8.8 15 8.6 12.5Z" fill="#0c5aab"/><ellipse cx="11.8" cy="12.6" rx="2.9" ry="3.1" fill="#1d1d1d"/><path d="M13.2 15.6Q19.5 17 24.4 12.6L24.6 16.8Q23.5 17.3 22.6 17.3Q19 17.9 14 17.7Z" fill="#1d1d1d"/></svg>
<svg class="a" style="left:731px;top:732px" width="24" height="24" viewBox="0 0 24 24"><rect width="24" height="24" fill="#ec4c1c"/><path d="M11.9 1.8L19 3.9L18.3 12.7L14 17.7L12.7 13.9L11.5 6.8Z" fill="#fff"/><path d="M9.2 6Q6 7.5 5.2 9.8L4.2 19.8L11.7 21.6L11.9 16L10 8.9Z" fill="#fff"/></svg>
<svg class="a" style="left:775px;top:733px" width="24" height="22" viewBox="0 0 24 22"><defs><linearGradient id="fd" x1="0" y1="0" x2="1" y2="1"><stop offset="0" stop-color="#ffe28a"/><stop offset="1" stop-color="#ffbf1a"/></linearGradient></defs><path d="M0 1.2Q0 0 1.2 0H8.5L10.5 2.2V4H0Z" fill="#e5a200"/><path d="M0 4Q0 2.8 1.2 2.8H22.8Q24 2.8 24 4V21.8H0Z" fill="url(#fd)"/><path d="M4 21.8V16.5Q4 15 5.5 15H18.5Q20 15 20 16.5V21.8Z" fill="#1a8ee0"/><path d="M7.5 18.5H16.5" stroke="#0f6cb8" stroke-width="0.8"/></svg>
<div class="a" style="left:784px;top:760px;width:6px;height:3px;border-radius:2px;background:#9b9b9b"></div>
<svg class="a" style="left:819px;top:733px" width="25" height="22" viewBox="0 0 25 22"><rect x="6" y="0" width="18.5" height="22" rx="1" fill="#41a5ee"/><rect x="6" y="5.5" width="18.5" height="5.5" fill="#2b7cd3"/><rect x="6" y="11" width="18.5" height="5.5" fill="#185abd"/><rect x="6" y="16.5" width="18.5" height="5.5" fill="#103f91"/><rect x="0" y="5" width="12.5" height="12" rx="0.8" fill="#185abd"/><path d="M1.8 7.6L3.9 14.6L6.3 9L8.7 14.6L10.8 7.6" fill="none" stroke="#fff" stroke-width="1.8" stroke-linejoin="bevel"/></svg>
<svg class="a" style="left:862px;top:731px" width="25" height="25" viewBox="0 0 25 25"><defs><radialGradient id="ffb" cx="0.75" cy="0.15" r="1"><stop offset="0" stop-color="#fff44f"/><stop offset="0.3" stop-color="#ffc240"/><stop offset="0.55" stop-color="#ff8a16"/><stop offset="0.78" stop-color="#ff3b40"/><stop offset="1" stop-color="#e31587"/></radialGradient><linearGradient id="ffg" x1="0" y1="0" x2="0" y2="1"><stop offset="0" stop-color="#b834e6"/><stop offset="1" stop-color="#5b4bd8"/></linearGradient></defs><path d="M16 1Q19 4 21 6Q24.5 10 24 15Q23 23.5 13 24Q2.5 23.5 1.5 15Q1.3 10 3.6 6.5L5 4L6.5 6.5L8.5 4L9.5 7.5Q12 6 14 7Q14.5 3.5 16 1Z" fill="url(#ffb)"/><circle cx="12.7" cy="12.4" r="4.7" fill="url(#ffg)"/><path d="M3.5 10.5Q8 8.2 12 10L9.5 13.5Q7 11.2 3.5 10.5Z" fill="#ff9a1a"/></svg>
<svg class="a" style="left:906px;top:731px" width="25" height="25" viewBox="0 0 24 24"><g id="cr"><path d="M21.96 6.25A11.5 11.5 0 0 0 2.04 6.25L7.02 14.875A5.75 5.75 0 0 1 12 6.25Z" fill="#ea4335"/><path d="M21.96 6.25A11.5 11.5 0 0 0 2.04 6.25L7.02 14.875A5.75 5.75 0 0 1 12 6.25Z" fill="#fbbc04" transform="rotate(120 12 12)"/><path d="M21.96 6.25A11.5 11.5 0 0 0 2.04 6.25L7.02 14.875A5.75 5.75 0 0 1 12 6.25Z" fill="#34a853" transform="rotate(240 12 12)"/></g><circle cx="12" cy="12" r="5.75" fill="#fff"/><circle cx="12" cy="12" r="4.5" fill="#1a73e8"/></svg>
<div class="a" style="left:978px;top:725px;width:5px;height:39px;border-radius:0 4px 4px 0;background:#292929"></div>
<div class="a" style="left:943px;top:724px;width:36px;height:40px;border-radius:4px;background:#2d2d2d;border:1px solid #333"></div>
<svg class="a" style="left:950px;top:731px" width="25" height="25" viewBox="0 0 24 24"><g id="cr"><path d="M21.96 6.25A11.5 11.5 0 0 0 2.04 6.25L7.02 14.875A5.75 5.75 0 0 1 12 6.25Z" fill="#ea4335"/><path d="M21.96 6.25A11.5 11.5 0 0 0 2.04 6.25L7.02 14.875A5.75 5.75 0 0 1 12 6.25Z" fill="#fbbc04" transform="rotate(120 12 12)"/><path d="M21.96 6.25A11.5 11.5 0 0 0 2.04 6.25L7.02 14.875A5.75 5.75 0 0 1 12 6.25Z" fill="#34a853" transform="rotate(240 12 12)"/></g><circle cx="12" cy="12" r="5.75" fill="#fff"/><circle cx="12" cy="12" r="4.5" fill="#1a73e8"/></svg>
<svg class="a" style="left:964px;top:727px" width="16" height="16" viewBox="0 0 16 16"><circle cx="8" cy="8" r="7.7" fill="#dedae2"/><path d="M8 3.5L5.8 9L7 15H9L10.2 9Z" fill="#5a5a60"/><path d="M3 7Q4.5 11 6.5 14M13 7Q11.5 11 9.5 14" stroke="#6a6a70" stroke-width="1.3" fill="none"/><circle cx="4.3" cy="4.6" r="1.1" fill="#2a62b0"/><circle cx="11.7" cy="4.6" r="1.1" fill="#2a62b0"/><path d="M2.5 3Q8 0.5 13.5 3" stroke="#fff" stroke-width="1" fill="none"/></svg>
<div class="a" style="left:955px;top:760px;width:16px;height:3px;border-radius:2px;background:#4cc2ff"></div>
<svg class="a" style="left:995px;top:731px" width="25" height="25" viewBox="0 0 25 25"><circle cx="12.5" cy="12.5" r="12.2" fill="#1ed760"/><path d="M5.5 9Q13 6.5 19.5 10M6.5 12.8Q13 11 18.2 13.6M7.2 16.2Q12.5 14.8 17 17" fill="none" stroke="#111" stroke-width="2" stroke-linecap="round"/></svg>
<div class="a" style="left:1004px;top:760px;width:6px;height:3px;border-radius:2px;background:#9b9b9b"></div>
<svg class="a" style="left:1096px;top:739px" width="14" height="9" viewBox="0 0 14 9"><path d="M1.5 7.5L7 2L12.5 7.5" fill="none" stroke="#e8e8e8" stroke-width="1.5"/></svg>
<div class="t" style="left:1131px;top:731px;font-size:10.6px;line-height:13px;color:#eee">ESP</div>
<div class="t" style="left:1130px;top:747px;font-size:10.6px;line-height:13px;color:#eee">LAA</div>
<svg class="a" style="left:1170px;top:735px" width="19" height="18" viewBox="0 0 19 18"><path d="M11 3.5H1.5V13.5H13M4 16.5H13M7 13.5V16.5" fill="none" stroke="#eee" stroke-width="1.2"/><rect x="12.5" y="0.8" width="4" height="5.5" rx="1" fill="none" stroke="#eee" stroke-width="1.2"/><path d="M14.5 6.5V17" stroke="#eee" stroke-width="1.2"/></svg>
<svg class="a" style="left:1194px;top:736px" width="19" height="16" viewBox="0 0 19 16"><path d="M1 5H4L8.5 1.5V14.5L4 11H1Z" fill="none" stroke="#eee" stroke-width="1.2"/><path d="M11 5.5Q12.5 8 11 10.5" fill="none" stroke="#eee" stroke-width="1.2"/><path d="M13.5 3.5Q16 8 13.5 12.5" fill="none" stroke="#888" stroke-width="1.1"/><path d="M16 1.5Q19.5 8 16 14.5" fill="none" stroke="#666" stroke-width="1.1"/></svg>
<div class="t" style="left:1200px;width:83px;text-align:right;top:730px;font-size:12px;line-height:14px;color:#f2f2f2">11:55</div>
<div class="t" style="left:1200px;width:83px;text-align:right;top:746px;font-size:12.3px;line-height:14px;color:#f2f2f2">17/9/2024</div>
<svg class="a" style="left:1290px;top:736px" width="16" height="17" viewBox="0 0 16 17"><path d="M8 1Q13 1 13 6.5V10.5L15 13.5H1L3 10.5V6.5Q3 1 8 1Z" fill="#93e2f8"/><path d="M5.5 14.5Q8 17.5 10.5 14.5Z" fill="#93e2f8"/></svg>
<svg class="a" style="left:1322px;top:733px" width="25" height="24" viewBox="0 0 25 24"><defs><linearGradient id="cp1" x1="0" y1="0" x2="0" y2="1"><stop offset="0" stop-color="#22b4f8"/><stop offset="0.55" stop-color="#62bd5e"/><stop offset="1" stop-color="#f2c40c"/></linearGradient><linearGradient id="cp2" x1="0" y1="1" x2="1" y2="0"><stop offset="0" stop-color="#fb6a7a"/><stop offset="0.5" stop-color="#e352a8"/><stop offset="1" stop-color="#a64ef0"/></linearGradient></defs><path d="M13 1Q16.5 0.6 17.6 3L18.8 5.8H12Z" fill="#1546d6"/><path d="M7.5 0.9H14L9.6 13.5Q8.9 15.4 7 15.4H2.7Q0.3 15.4 0.9 13L4.6 3Q5.5 0.9 7.5 0.9Z" fill="url(#cp1)"/><path d="M15.5 6H21.4Q23.8 6 23.1 8.4L21.8 13.4Q21.2 15.4 19.3 15.4H12L14 8.2Q14.6 6 15.5 6Z" fill="url(#cp2)"/><rect x="6" y="16" width="18" height="7" rx="2.6" fill="#ffc400"/><text x="15.2" y="22" text-anchor="middle" font-family="Liberation Sans" font-weight="bold" font-size="6.8" fill="#111" letter-spacing="0.6">PRE</text></svg>
</body></html>
